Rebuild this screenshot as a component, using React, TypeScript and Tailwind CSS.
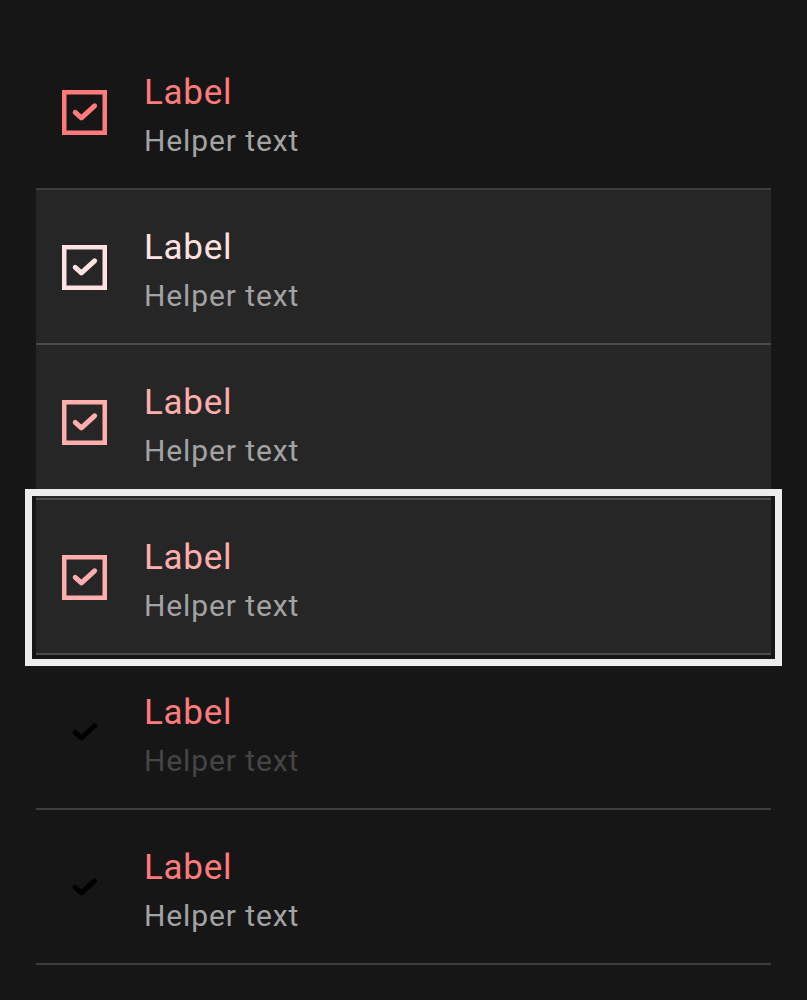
import React from "react";

type Row = {
  bg: string;
  label: string;
  helper: string;
  box: boolean;
  check: string;
  boxColor: string;
  focus?: boolean;
};

function CheckIcon({ box, boxColor, check }: { box: boolean; boxColor: string; check: string }) {
  return (
    <svg width="45" height="45" viewBox="0 0 45 45" className="block">
      {box && (
        <rect x="2.25" y="2.25" width="40.5" height="40.5" fill="none" stroke={boxColor} strokeWidth="4.5" />
      )}
      <path
        d="M13.2 22.4 L19.4 27.9 L32.6 15.8"
        fill="none"
        stroke={check}
        strokeWidth="5"
        strokeLinecap="round"
        strokeLinejoin="round"
      />
    </svg>
  );
}

function ListRow({ row }: { row: Row }) {
  const base =
    "flex h-[155px] w-full items-start border-b-2 border-[rgba(255,255,255,0.17)] " + row.bg;
  return (
    <div
      className={
        row.focus
          ? base + " outline outline-[7px] outline-[#ececec] outline-offset-[4px] relative z-10"
          : base
      }
    >
      <div className="ml-[26px] mt-[55px] shrink-0">
        <CheckIcon box={row.box} boxColor={row.boxColor} check={row.check} />
      </div>
      <div className="ml-[37px] flex flex-col pt-[40px]">
        <div className={"h-[35px] text-[35px] leading-[35px] tracking-[0.7px] " + row.label}>Label</div>
        <div className={"mt-[16px] h-[30px] text-[30px] leading-[30px] tracking-[0.9px] " + row.helper}>
          Helper text
        </div>
      </div>
    </div>
  );
}

export default function App() {
  const rows: Row[] = [
    {
      bg: "bg-transparent",
      label: "text-[#ff7b7b]",
      helper: "text-[#a3a3a3]",
      box: true,
      boxColor: "#ff7b7b",
      check: "#ff7b7b",
    },
    {
      bg: "bg-[#262626]",
      label: "text-[#ffe1e1]",
      helper: "text-[#a3a3a3]",
      box: true,
      boxColor: "#ffe1e1",
      check: "#ffe1e1",
    },
    {
      bg: "bg-[#262626]",
      label: "text-[#ffaeae]",
      helper: "text-[#a3a3a3]",
      box: true,
      boxColor: "#ffaeae",
      check: "#ffaeae",
    },
    {
      bg: "bg-[#262626]",
      label: "text-[#ffaeae]",
      helper: "text-[#a3a3a3]",
      box: true,
      boxColor: "#ffaeae",
      check: "#ffaeae",
      focus: true,
    },
    {
      bg: "bg-transparent",
      label: "text-[#ff7b7b]",
      helper: "text-[#454545]",
      box: false,
      boxColor: "transparent",
      check: "#000000",
    },
    {
      bg: "bg-transparent",
      label: "text-[#ff7b7b]",
      helper: "text-[#a3a3a3]",
      box: false,
      boxColor: "transparent",
      check: "#000000",
    },
  ];
  return (
    <div
      className="min-h-[1000px] w-full bg-[#161616] pt-[35px]"
      style={{ fontFamily: "Roboto, 'Noto Sans', sans-serif" }}
    >
      <div className="ml-[36px] flex w-[735px] flex-col">
        {rows.map((r, i) => (
          <ListRow key={i} row={r} />
        ))}
      </div>
    </div>
  );
}
